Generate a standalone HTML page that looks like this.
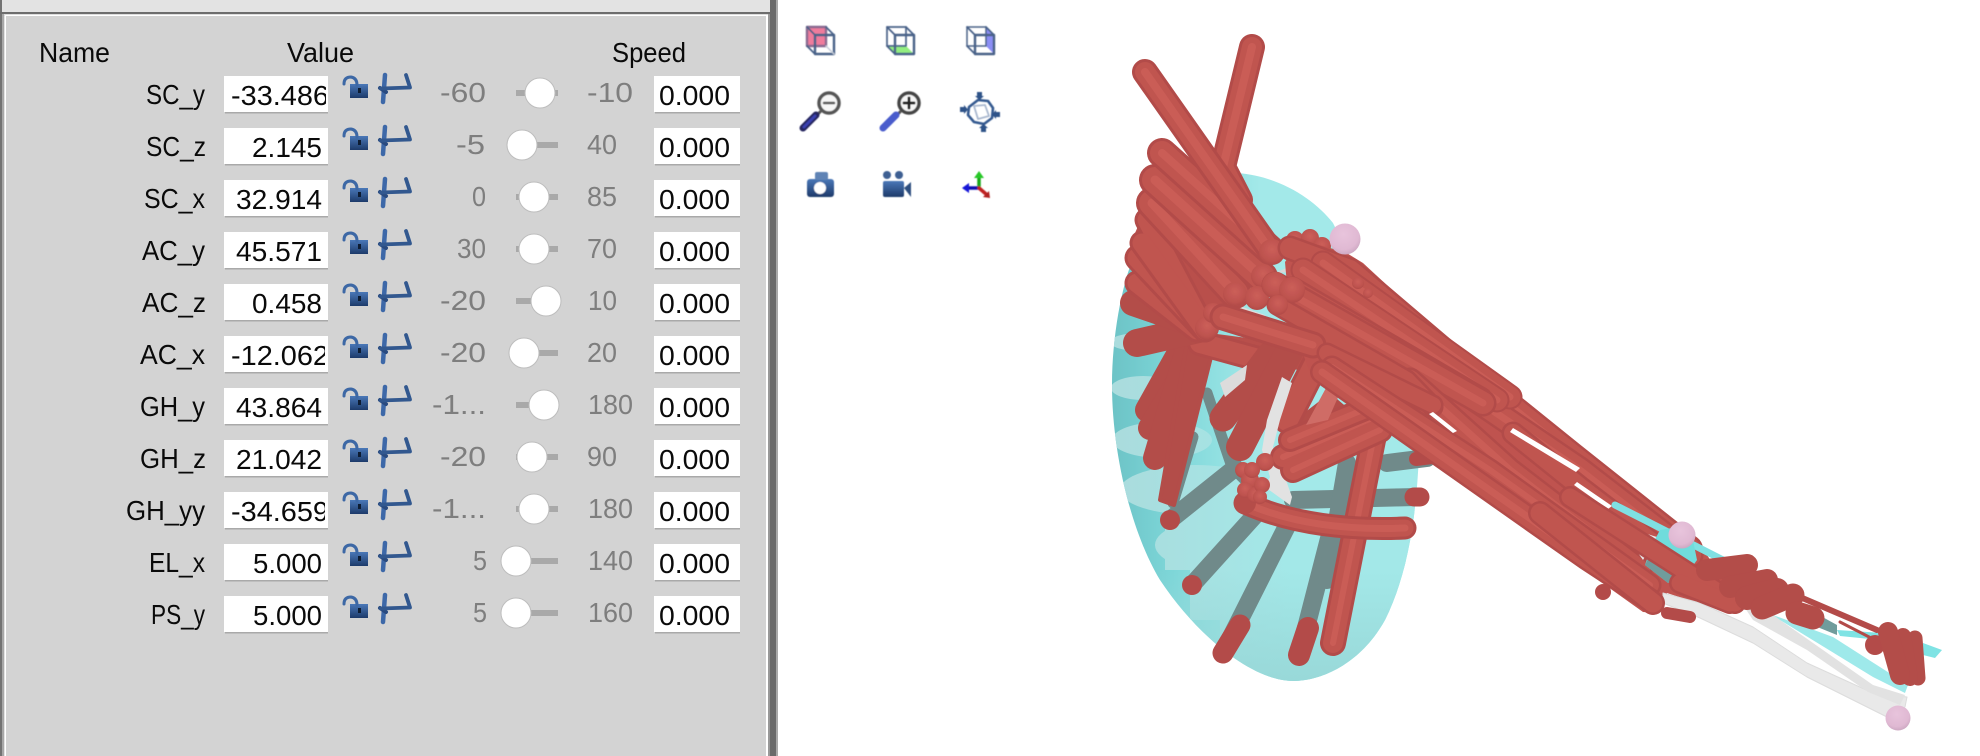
<!DOCTYPE html>
<html><head><meta charset="utf-8"><title>Model</title>
<style>
html,body{margin:0;padding:0;background:#fff;width:1980px;height:756px;overflow:hidden}
svg{display:block}
text{font-family:"Liberation Sans",sans-serif;font-size:28px;fill:#0a0a0a}
.g{fill:#7e7e7e}
.d{stroke:#b24c48}.m{stroke:#c05450}.l{stroke:#ca5d57}.k{stroke:#b34d49}
path,line{stroke-linecap:round;stroke-linejoin:round}
</style></head><body>
<svg width="1980" height="756" viewBox="0 0 1980 756" xmlns="http://www.w3.org/2000/svg">
<defs>
<filter id="b"><feGaussianBlur stdDeviation="0.55"/></filter>
<filter id="b2"><feGaussianBlur stdDeviation="0.35"/></filter>
<linearGradient id="lk" x1="0" y1="0" x2="0" y2="1"><stop offset="0" stop-color="#4a78b8"/><stop offset="1" stop-color="#1d3a6a"/></linearGradient>
<linearGradient id="cy" gradientUnits="userSpaceOnUse" x1="1112" y1="0" x2="1260" y2="0"><stop offset="0" stop-color="#6cc3c6"/><stop offset=".4" stop-color="#7dd6d8"/><stop offset="1" stop-color="#a3e9e9"/></linearGradient>
<linearGradient id="cr" gradientUnits="userSpaceOnUse" x1="1120" y1="0" x2="1290" y2="0"><stop offset="0" stop-color="#aadcdd"/><stop offset="1" stop-color="#a3e8e8"/></linearGradient>
<linearGradient id="bt" gradientUnits="userSpaceOnUse" x1="0" y1="570" x2="0" y2="685"><stop offset="0" stop-color="#98d8d8" stop-opacity="0"/><stop offset="1" stop-color="#98d8d8"/></linearGradient>
<radialGradient id="pk" cx=".45" cy=".35" r=".7"><stop offset="0" stop-color="#e8c4dc"/><stop offset=".7" stop-color="#e0b9d3"/><stop offset="1" stop-color="#c8a4be"/></radialGradient>
<radialGradient id="rj" cx=".5" cy=".4" r=".65"><stop offset="0" stop-color="#cc5f59"/><stop offset=".7" stop-color="#bd524e"/><stop offset="1" stop-color="#ac4845"/></radialGradient>
<clipPath id="c1"><rect x="226" y="70" width="100" height="50"/></clipPath>
<clipPath id="c2"><rect x="226" y="330" width="99" height="50"/></clipPath>
<clipPath id="c3"><rect x="226" y="486" width="99" height="50"/></clipPath>
<clipPath id="th"><path d="M1237 173C1280 176 1315 200 1333 223L1420 400C1420 480 1415 560 1385 620C1360 665 1320 681 1293 681C1255 681 1200 640 1160 580C1130 530 1112 450 1112 385C1112 330 1125 260 1147 233C1165 205 1200 175 1237 173Z"/></clipPath>
<g id="ic" filter="url(#b2)">
<rect x="350" y="84" width="18" height="14" fill="url(#lk)"/>
<rect x="358" y="88" width="3" height="5" fill="#0d1a33"/>
<path d="M344 84Q344 77 351 77Q357 78 357 85" fill="none" stroke="#3d68a5" stroke-width="3"/>
<path d="M385 75L383 102" fill="none" stroke="#3e68a8" stroke-width="4.500"/>
<path d="M380 88L386 92" fill="none" stroke="#2a4c80" stroke-width="4"/>
<path d="M381 88.500L410 87.500L406 75" fill="none" stroke="#32588f" stroke-width="3.800"/>
</g>
<g id="f"><rect x="0" y="0" width="104" height="36" fill="#fff"/><rect x="1" y="36" width="103" height="1.500" fill="#a9a9a9"/></g>
<g id="s"><rect x="0" y="0" width="86" height="36" fill="#fff"/><rect x="1" y="36" width="85" height="1.500" fill="#a9a9a9"/></g>

<g id="t2"><path d="M1252 47L1223 167L1240 200"/></g>
<g id="t1"><path d="M1145 72L1270 250"/></g>
<g id="t3"><path d="M1162 153L1270 250"/></g>
<g id="t4"><path d="M1155 180L1262 277"/></g>
<g id="t5"><path d="M1152 203L1235 293"/></g>
<g id="t6"><path d="M1147 220L1205 330"/><path d="M1142 243L1205 330"/></g>
<g id="t8"><path d="M1138 258L1203 327"/></g>
<g id="t9"><path d="M1137 283L1197 330"/></g>
<g id="t10"><path d="M1133 303L1203 327"/></g>
<g id="t11"><path d="M1137 343L1203 328"/></g>
<g id="fa"><path d="M1147 410L1190 333"/><path d="M1150 428L1185 370"/></g>
<g id="fb"><path d="M1155 458L1190 340"/></g>
<g id="fd"><path d="M1223 418L1270 355"/></g>
<g id="fd2"><path d="M1240 447L1290 350"/></g>
<g id="fe"><path d="M1287 420L1325 345"/></g>
<g id="ff"><path d="M1283 457L1390 410"/><path d="M1293 470L1380 430"/></g>
<g id="fg"><path d="M1290 440L1375 405"/></g>
<g id="h1"><path d="M1200 343L1273 363"/></g>
<g id="e"><path d="M1333 643L1373 440L1380 415"/></g>
<g id="cv"><path d="M1245 503Q1310 532 1405 528"/></g>
<g id="u1"><path d="M1340 268L1436 348L1505 402L1572 456L1689 549"/></g>
<g id="u0"><path d="M1290 248L1350 270L1450 355"/></g>
<g id="b13"><path d="M1477 400L1580 470L1690 555"/></g>
<g id="b14"><path d="M1513 433L1580 487L1665 552"/></g>
<g id="b5"><path d="M1323 263L1510 397"/></g>
<g id="b4"><path d="M1303 270L1497 400"/></g>
<g id="b3"><path d="M1292 290L1480 400"/></g>
<g id="b2a"><path d="M1275 285L1483 403"/></g>
<g id="b6"><path d="M1277 305L1407 380L1433 407"/></g>
<g id="b7"><path d="M1223 317L1313 345"/></g>
<g id="b8"><path d="M1327 353L1433 405"/></g>
<g id="b12"><path d="M1410 380L1510 470L1640 570"/></g>
<g id="b9"><path d="M1332 367L1490 470L1650 585"/></g>
<g id="b10"><path d="M1322 372L1586 558L1650 600"/></g>
<g id="x1"><path d="M1540 513L1653 603"/></g>
<g id="x2"><path d="M1570 497L1735 603"/><path d="M1680 583L1730 603"/></g>
<g id="w1"><path d="M1707 570L1747 565"/><path d="M1730 587L1767 580"/></g>
<g id="w2"><path d="M1747 598L1777 590"/></g>
<g id="w3"><path d="M1762 608L1793 595"/><path d="M1797 613L1813 618"/></g>
<g id="h3"><path d="M1888 632L1900 675"/></g>
<g id="h4"><path d="M1903 636L1910 678"/></g>
<g id="h5"><path d="M1915 638L1918 678"/></g>
</defs>

<!-- chrome -->
<rect x="0" y="0" width="778" height="756" fill="#e3e3e3"/>
<rect x="0" y="0" width="2" height="756" fill="#737373"/>
<rect x="2" y="14" width="2" height="742" fill="#a8a8a8"/>
<rect x="0" y="12" width="770" height="2" fill="#6d6d6d"/>
<rect x="4" y="14" width="766" height="2" fill="#dcdcdc"/>
<rect x="5" y="15" width="763" height="741" fill="#fff"/>
<rect x="6" y="16" width="760" height="740" fill="#d3d3d3"/>
<rect x="768" y="14" width="2" height="742" fill="#999"/>
<rect x="770" y="0" width="6" height="756" fill="#6a6a6a"/>
<rect x="776" y="0" width="2" height="756" fill="#a9a9a9"/>

<!-- headers -->
<text x="39" y="62" textLength="71" lengthAdjust="spacingAndGlyphs">Name</text>
<text x="287" y="62" textLength="67" lengthAdjust="spacingAndGlyphs">Value</text>
<text x="612" y="62" textLength="74" lengthAdjust="spacingAndGlyphs">Speed</text>

<!-- rows: fields -->
<use href="#f" x="224" y="76"/><use href="#f" x="224" y="128"/><use href="#f" x="224" y="180"/><use href="#f" x="224" y="232"/><use href="#f" x="224" y="284"/><use href="#f" x="224" y="336"/><use href="#f" x="224" y="388"/><use href="#f" x="224" y="440"/><use href="#f" x="224" y="492"/><use href="#f" x="224" y="544"/><use href="#f" x="224" y="596"/>
<use href="#s" x="654" y="76"/><use href="#s" x="654" y="128"/><use href="#s" x="654" y="180"/><use href="#s" x="654" y="232"/><use href="#s" x="654" y="284"/><use href="#s" x="654" y="336"/><use href="#s" x="654" y="388"/><use href="#s" x="654" y="440"/><use href="#s" x="654" y="492"/><use href="#s" x="654" y="544"/><use href="#s" x="654" y="596"/>
<use href="#ic" y="0"/><use href="#ic" y="52"/><use href="#ic" y="104"/><use href="#ic" y="156"/><use href="#ic" y="208"/><use href="#ic" y="260"/><use href="#ic" y="312"/><use href="#ic" y="364"/><use href="#ic" y="416"/><use href="#ic" y="468"/><use href="#ic" y="520"/>

<!-- labels -->
<text x="146" y="104" textLength="59" lengthAdjust="spacingAndGlyphs">SC_y</text>
<text x="146" y="156" textLength="60" lengthAdjust="spacingAndGlyphs">SC_z</text>
<text x="144" y="208" textLength="61" lengthAdjust="spacingAndGlyphs">SC_x</text>
<text x="142" y="260" textLength="63" lengthAdjust="spacingAndGlyphs">AC_y</text>
<text x="142" y="312" textLength="64" lengthAdjust="spacingAndGlyphs">AC_z</text>
<text x="140" y="364" textLength="65" lengthAdjust="spacingAndGlyphs">AC_x</text>
<text x="140" y="416" textLength="65" lengthAdjust="spacingAndGlyphs">GH_y</text>
<text x="140" y="468" textLength="66" lengthAdjust="spacingAndGlyphs">GH_z</text>
<text x="126" y="520" textLength="79" lengthAdjust="spacingAndGlyphs">GH_yy</text>
<text x="149" y="572" textLength="56" lengthAdjust="spacingAndGlyphs">EL_x</text>
<text x="151" y="624" textLength="54" lengthAdjust="spacingAndGlyphs">PS_y</text>

<!-- values -->
<g clip-path="url(#c1)"><text x="231" y="105" textLength="98" lengthAdjust="spacingAndGlyphs">-33.486</text></g>
<text x="252" y="157" textLength="70" lengthAdjust="spacingAndGlyphs">2.145</text>
<text x="236" y="209" textLength="86" lengthAdjust="spacingAndGlyphs">32.914</text>
<text x="236" y="261" textLength="86" lengthAdjust="spacingAndGlyphs">45.571</text>
<text x="252" y="313" textLength="70" lengthAdjust="spacingAndGlyphs">0.458</text>
<g clip-path="url(#c2)"><text x="231" y="365" textLength="98" lengthAdjust="spacingAndGlyphs">-12.062</text></g>
<text x="236" y="417" textLength="86" lengthAdjust="spacingAndGlyphs">43.864</text>
<text x="236" y="469" textLength="86" lengthAdjust="spacingAndGlyphs">21.042</text>
<g clip-path="url(#c3)"><text x="231" y="521" textLength="98" lengthAdjust="spacingAndGlyphs">-34.659</text></g>
<text x="253" y="573" textLength="69" lengthAdjust="spacingAndGlyphs">5.000</text>
<text x="253" y="625" textLength="69" lengthAdjust="spacingAndGlyphs">5.000</text>

<!-- min -->
<text class="g" x="440" y="102" textLength="46" lengthAdjust="spacingAndGlyphs">-60</text>
<text class="g" x="456" y="154" textLength="29" lengthAdjust="spacingAndGlyphs">-5</text>
<text class="g" x="472" y="206" textLength="14" lengthAdjust="spacingAndGlyphs">0</text>
<text class="g" x="457" y="258" textLength="29" lengthAdjust="spacingAndGlyphs">30</text>
<text class="g" x="440" y="310" textLength="46" lengthAdjust="spacingAndGlyphs">-20</text>
<text class="g" x="440" y="362" textLength="46" lengthAdjust="spacingAndGlyphs">-20</text>
<text class="g" x="432" y="414" textLength="54" lengthAdjust="spacingAndGlyphs">-1...</text>
<text class="g" x="440" y="466" textLength="46" lengthAdjust="spacingAndGlyphs">-20</text>
<text class="g" x="432" y="518" textLength="54" lengthAdjust="spacingAndGlyphs">-1...</text>
<text class="g" x="473" y="570" textLength="14" lengthAdjust="spacingAndGlyphs">5</text>
<text class="g" x="473" y="622" textLength="14" lengthAdjust="spacingAndGlyphs">5</text>

<!-- max -->
<text class="g" x="587" y="102" textLength="46" lengthAdjust="spacingAndGlyphs">-10</text>
<text class="g" x="587" y="154" textLength="30" lengthAdjust="spacingAndGlyphs">40</text>
<text class="g" x="587" y="206" textLength="30" lengthAdjust="spacingAndGlyphs">85</text>
<text class="g" x="587" y="258" textLength="30" lengthAdjust="spacingAndGlyphs">70</text>
<text class="g" x="588" y="310" textLength="29" lengthAdjust="spacingAndGlyphs">10</text>
<text class="g" x="587" y="362" textLength="30" lengthAdjust="spacingAndGlyphs">20</text>
<text class="g" x="588" y="414" textLength="45" lengthAdjust="spacingAndGlyphs">180</text>
<text class="g" x="587" y="466" textLength="30" lengthAdjust="spacingAndGlyphs">90</text>
<text class="g" x="588" y="518" textLength="45" lengthAdjust="spacingAndGlyphs">180</text>
<text class="g" x="588" y="570" textLength="45" lengthAdjust="spacingAndGlyphs">140</text>
<text class="g" x="588" y="622" textLength="45" lengthAdjust="spacingAndGlyphs">160</text>

<!-- speed -->
<text x="659" y="105" textLength="71" lengthAdjust="spacingAndGlyphs">0.000</text>
<text x="659" y="157" textLength="71" lengthAdjust="spacingAndGlyphs">0.000</text>
<text x="659" y="209" textLength="71" lengthAdjust="spacingAndGlyphs">0.000</text>
<text x="659" y="261" textLength="71" lengthAdjust="spacingAndGlyphs">0.000</text>
<text x="659" y="313" textLength="71" lengthAdjust="spacingAndGlyphs">0.000</text>
<text x="659" y="365" textLength="71" lengthAdjust="spacingAndGlyphs">0.000</text>
<text x="659" y="417" textLength="71" lengthAdjust="spacingAndGlyphs">0.000</text>
<text x="659" y="469" textLength="71" lengthAdjust="spacingAndGlyphs">0.000</text>
<text x="659" y="521" textLength="71" lengthAdjust="spacingAndGlyphs">0.000</text>
<text x="659" y="573" textLength="71" lengthAdjust="spacingAndGlyphs">0.000</text>
<text x="659" y="625" textLength="71" lengthAdjust="spacingAndGlyphs">0.000</text>

<!-- sliders -->
<g fill="#a9a9a9">
<rect x="516" y="90" width="42" height="6"/><rect x="516" y="142" width="42" height="6"/><rect x="516" y="194" width="42" height="6"/><rect x="516" y="246" width="42" height="6"/><rect x="516" y="298" width="42" height="6"/><rect x="516" y="350" width="42" height="6"/><rect x="516" y="402" width="42" height="6"/><rect x="516" y="454" width="42" height="6"/><rect x="516" y="506" width="42" height="6"/><rect x="516" y="558" width="42" height="6"/><rect x="516" y="610" width="42" height="6"/>
</g>
<g fill="#fff" stroke="#bdbdbd" stroke-width="1">
<circle cx="540" cy="93" r="15"/><circle cx="522" cy="145" r="15"/><circle cx="534" cy="197" r="15"/><circle cx="534" cy="249" r="15"/><circle cx="546" cy="301" r="15"/><circle cx="524" cy="353" r="15"/><circle cx="544" cy="405" r="15"/><circle cx="532" cy="457" r="15"/><circle cx="534" cy="509" r="15"/><circle cx="516" cy="561" r="15"/><circle cx="516" cy="613" r="15"/>
</g>

<!-- toolbar icons -->
<g filter="url(#b)" fill="none" stroke="#4a6288" stroke-width="2.400" stroke-linejoin="round">
<rect x="807" y="27" width="19" height="19" fill="#ef7b9c" stroke="#8a6a90"/>
<rect x="815" y="35" width="19" height="19"/><path d="M807 27L815 35M826 27L834 35M807 46L815 54" stroke-width="1.800"/><path d="M826 46L834 54" stroke="#c5cdd9" stroke-width="1.500"/>
<path d="M887 46L906 46L914 54L895 54Z" fill="#93ee80" stroke="none"/>
<rect x="887" y="27" width="19" height="19" stroke-width="1.700"/><rect x="895" y="35" width="19" height="19"/><path d="M887 27L895 35M906 27L914 35M887 46L895 54" stroke-width="1.800"/>
<path d="M986 27L994 35L994 54L986 46Z" fill="#8b8ef5" stroke="none"/>
<rect x="967" y="27" width="19" height="19" stroke-width="1.500"/><rect x="975" y="35" width="19" height="19"/><path d="M967 27L975 35M986 27L994 35M967 46L975 54" stroke-width="1.800"/>
</g>
<g filter="url(#b)" fill="none">
<circle cx="829" cy="103" r="10" stroke="#555" stroke-width="3.500" fill="#f6f6f6"/>
<line x1="824" y1="103" x2="834" y2="103" stroke="#555" stroke-width="2.500"/>
<line x1="820" y1="112" x2="815" y2="117" stroke="#555" stroke-width="3"/>
<line x1="803" y1="128" x2="816" y2="115" stroke="#26265e" stroke-width="7"/>
<line x1="804" y1="127" x2="815" y2="116" stroke="#3a3fb0" stroke-width="3"/>
<circle cx="909" cy="103" r="10" stroke="#444" stroke-width="3.500" fill="#f6f6f6"/>
<path d="M904 103L914 103M909 98L909 108" stroke="#222" stroke-width="3"/>
<line x1="900" y1="112" x2="896" y2="116" stroke="#555" stroke-width="3"/>
<line x1="883" y1="128" x2="896" y2="115" stroke="#4a5ccc" stroke-width="7"/>
<path d="M969 107L978 100L988 101L993 108L992 118L984 124L974 122L968 115Z" stroke="#355a90" stroke-width="2.600"/>
<path d="M974 106L985 105L989 116L978 119Z" stroke="#a9b8cf" stroke-width="1.800"/>
<rect x="977" y="92" width="5" height="5" fill="#2f5288"/><path d="M975 96L984 96L979.500 100Z" fill="#2f5288"/>
<rect x="981" y="127" width="5" height="5" fill="#2f5288"/><path d="M979 128L988 128L983.500 124Z" fill="#2f5288"/>
<rect x="960" y="107" width="5" height="5" fill="#2f5288"/><path d="M964 105L964 114L968 109.500Z" fill="#2f5288"/>
<rect x="995" y="112" width="5" height="5" fill="#2f5288"/><path d="M996 110L996 119L992 114.500Z" fill="#2f5288"/>
<rect x="807" y="179" width="27" height="18" rx="3" fill="url(#lk)"/>
<rect x="815" y="172" width="13" height="8" rx="2" fill="#5f83b5"/>
<circle cx="820" cy="188" r="6" fill="#fff"/>
<circle cx="887" cy="175" r="4" fill="#3c5f92"/><circle cx="899" cy="175" r="4" fill="#3c5f92"/>
<rect x="883" y="181" width="21" height="16" rx="2" fill="url(#lk)"/>
<path d="M904 188L911 182L911 197Z" fill="#2d5080"/>
<path d="M979 188L979 176" stroke="#18a818" stroke-width="3.500"/><path d="M974 178L979 171L984 178Z" fill="#28c828"/>
<path d="M979 188L968 188" stroke="#1010b0" stroke-width="3.500"/><path d="M969 183L962 188L969 193Z" fill="#1818d8"/>
<path d="M979 188L986 194" stroke="#c02020" stroke-width="3.500"/><path d="M983 197L990 198L989 191Z" fill="#b02020"/>
</g>

<!-- 3D scene -->
<g filter="url(#b2)" fill="none">
<path d="M1237 173C1280 176 1315 200 1333 223L1420 400C1420 480 1415 560 1385 620C1360 665 1320 681 1293 681C1255 681 1200 640 1160 580C1130 530 1112 450 1112 385C1112 330 1125 260 1147 233C1165 205 1200 175 1237 173Z" fill="url(#cy)"/>
<g clip-path="url(#th)" fill="url(#cr)">
<ellipse cx="1140" cy="342" rx="30" ry="9"/>
<ellipse cx="1143" cy="388" rx="32" ry="12"/>
<ellipse cx="1162" cy="440" rx="50" ry="18"/>
<ellipse cx="1195" cy="490" rx="75" ry="25"/>
<rect x="1165" y="510" width="300" height="60"/>
<ellipse cx="1240" cy="545" rx="85" ry="30"/>
<rect x="1190" y="560" width="250" height="60"/>
<ellipse cx="1275" cy="600" rx="75" ry="30"/>
<rect x="1220" y="610" width="220" height="80"/>
<rect x="1112" y="570" width="330" height="115" fill="url(#bt)"/>
</g>
<!-- ribs -->
<g stroke="#6f8a8a" stroke-width="18">
<path d="M1170 520L1235 468"/><path d="M1192 585L1257 513"/><path d="M1223 653L1290 520"/><path d="M1299 655L1333 523"/>
<path d="M1293 500L1417 497"/><path d="M1387 463L1427 458"/><path d="M1347 463L1327 580"/>
</g>
<g stroke="#6f8a8a" stroke-width="11"><path d="M1193 437L1173 503"/><path d="M1207 393L1232 467L1255 490"/></g>
<g fill="#b34c49" stroke="none">
<circle cx="1170" cy="520" r="10"/><circle cx="1192" cy="585" r="10"/><circle cx="1418" cy="497" r="9.500"/>
</g>
<path d="M1223 653L1240 625" stroke="#b34c49" stroke-width="21"/>
<path d="M1299 655L1308 628" stroke="#b34c49" stroke-width="22"/>
<path d="M1414 497L1420 497" stroke="#b34c49" stroke-width="19"/>
<path d="M1416 459L1440 456" stroke="#b34c49" stroke-width="14"/>

<!-- back tube -->
<use href="#t2" class="d" stroke-width="26"/><use href="#t2" class="m" stroke-width="20"/><use href="#t2" class="l" stroke-width="8"/>

<!-- fan -->
<use href="#fa" class="k" stroke-width="24"/>
<use href="#fb" class="k" stroke-width="24"/>
<path d="M1160 500L1174 505L1212 353L1187 343Z" fill="#b34d49" stroke="#b34d49" stroke-width="4"/>
<path d="M1187 330L1300 345L1310 372L1195 352Z" fill="#b8504b"/>
<use href="#h1" class="d" stroke-width="26"/><use href="#h1" class="m" stroke-width="20"/>

<!-- mass under lower-right fan -->
<path d="M1282 430L1330 393L1370 427L1390 437L1293 480L1277 457Z" fill="#b34d49"/>
<use href="#fd" class="k" stroke-width="27"/>
<use href="#fd2" class="k" stroke-width="28"/>
<use href="#e" class="d" stroke-width="26"/><use href="#e" class="m" stroke-width="20"/><use href="#e" class="l" stroke-width="6"/>
<use href="#fe" class="d" stroke-width="28"/><use href="#fe" class="m" stroke-width="22"/>

<!-- curved tube -->
<use href="#cv" class="d" stroke-width="23"/><use href="#cv" class="m" stroke-width="17"/><use href="#cv" class="l" stroke-width="7"/>
<circle cx="1245" cy="503" r="11" fill="#b54d49"/>

<!-- bones -->
<path d="M1282 377L1267 420L1262 450L1270 477L1265 487L1290 505L1292 497L1287 483L1273 447L1280 420L1292 383Z" fill="#e2e2e2"/>
<path d="M1220 383L1247 365L1245 380L1225 397Z" fill="#dcdcdc"/>
<path d="M1223 300L1265 315L1265 320L1222 306Z" fill="#ddd"/>

<use href="#ff" class="d" stroke-width="26"/><use href="#ff" class="m" stroke-width="20"/><use href="#ff" class="l" stroke-width="6"/>
<use href="#fg" class="d" stroke-width="24"/><use href="#fg" class="m" stroke-width="18"/><use href="#fg" class="l" stroke-width="6"/>
<path d="M1306 425L1333 375L1350 370L1328 420Z" fill="#cf6c66"/>
<g fill="url(#rj)" stroke="none">
<circle cx="1265" cy="462" r="9"/><circle cx="1243" cy="470" r="8"/><circle cx="1250" cy="480" r="9"/><circle cx="1245" cy="490" r="8"/><circle cx="1255" cy="495" r="8"/><circle cx="1262" cy="485" r="8"/><circle cx="1252" cy="470" r="8"/><circle cx="1260" cy="497" r="7"/>
</g>

<!-- upper left mass + tubes -->
<path d="M1147 177L1143 200L1142 217L1132 240L1130 257L1143 280L1123 297L1125 310L1180 320L1197 337L1223 310L1247 287L1213 247L1180 210Z" fill="#b9504c"/>
<use href="#t11" class="k" stroke-width="28"/>
<use href="#t10" class="k" stroke-width="26"/>
<use href="#t9" class="d" stroke-width="25"/><use href="#t9" class="m" stroke-width="19"/>
<use href="#t8" class="d" stroke-width="27"/><use href="#t8" class="m" stroke-width="21"/>
<use href="#t6" class="d" stroke-width="25"/><use href="#t6" class="m" stroke-width="19"/>
<use href="#t5" class="d" stroke-width="32"/><use href="#t5" class="m" stroke-width="26"/><use href="#t5" class="l" stroke-width="9"/>
<use href="#t4" class="d" stroke-width="32"/><use href="#t4" class="m" stroke-width="26"/><use href="#t4" class="l" stroke-width="9"/>
<use href="#t3" class="d" stroke-width="30"/><use href="#t3" class="m" stroke-width="24"/><use href="#t3" class="l" stroke-width="8"/>
<use href="#t1" class="d" stroke-width="26"/><use href="#t1" class="m" stroke-width="20"/><use href="#t1" class="l" stroke-width="8"/>
<g fill="url(#rj)" stroke="none">
<circle cx="1272" cy="252" r="13"/><circle cx="1263" cy="276" r="12"/><circle cx="1235" cy="294" r="12"/><circle cx="1207" cy="328" r="12"/><circle cx="1257" cy="298" r="12"/><circle cx="1213" cy="313" r="10"/>
<circle cx="1295" cy="240" r="9"/><circle cx="1310" cy="238" r="9"/><circle cx="1322" cy="246" r="9"/>
</g>
<path d="M1275 273L1327 250L1326 257L1292 272Z" fill="#d8d8d8"/>

<!-- main bundle -->
<path d="M1285 262L1300 240L1345 252L1363 263L1443 337L1510 390L1580 447L1623 480L1697 540L1737 600L1730 610L1697 603L1667 593L1657 613L1643 612L1580 567L1313 380L1290 320Z" fill="#bf534f"/>
<use href="#u1" class="d" stroke-width="28"/><use href="#u1" class="m" stroke-width="23"/><use href="#u1" class="l" stroke-width="8"/>
<use href="#u0" class="d" stroke-width="25"/><use href="#u0" class="m" stroke-width="20"/>
<use href="#b13" class="d" stroke-width="27"/><use href="#b13" class="m" stroke-width="22"/><use href="#b13" class="l" stroke-width="7"/>
<use href="#b5" class="d" stroke-width="25"/><use href="#b5" class="m" stroke-width="21"/><use href="#b5" class="l" stroke-width="7"/>
<use href="#b4" class="d" stroke-width="25"/><use href="#b4" class="m" stroke-width="21"/><use href="#b4" class="l" stroke-width="7"/>
<use href="#b14" class="d" stroke-width="23"/><use href="#b14" class="m" stroke-width="18"/>
<use href="#b3" class="d" stroke-width="27"/><use href="#b3" class="m" stroke-width="22"/><use href="#b3" class="l" stroke-width="8"/>
<use href="#b2a" class="d" stroke-width="27"/><use href="#b2a" class="m" stroke-width="22"/><use href="#b2a" class="l" stroke-width="7"/>
<use href="#b12" class="d" stroke-width="25"/><use href="#b12" class="m" stroke-width="20"/><use href="#b12" class="l" stroke-width="7"/>
<use href="#b6" class="d" stroke-width="21"/><use href="#b6" class="m" stroke-width="16"/>
<use href="#b7" class="d" stroke-width="27"/><use href="#b7" class="m" stroke-width="21"/><use href="#b7" class="l" stroke-width="7"/>
<use href="#b8" class="d" stroke-width="21"/><use href="#b8" class="m" stroke-width="16"/>
<use href="#b9" class="d" stroke-width="23"/><use href="#b9" class="m" stroke-width="18"/><use href="#b9" class="l" stroke-width="6"/>
<use href="#b10" class="d" stroke-width="24"/><use href="#b10" class="m" stroke-width="19"/><use href="#b10" class="l" stroke-width="7"/>
<g fill="url(#rj)" stroke="none">
<circle cx="1275" cy="285" r="13"/><circle cx="1292" cy="290" r="13"/><circle cx="1278" cy="305" r="10"/><circle cx="1358" cy="283" r="6"/><circle cx="1368" cy="293" r="5"/>
</g>
<!-- slits -->
<path d="M1433 412L1457 431L1453 433L1429 414Z" fill="#fff"/>
<path d="M1513 428L1580 468L1576 472L1510 432Z" fill="#fff"/>
<path d="M1577 482L1612 506L1608 509L1574 485Z" fill="#fff"/>

<!-- forearm -->
<path d="M1663 593L1700 603L1753 627L1807 663L1873 693L1907 697L1905 707L1887 717L1807 677L1753 643L1700 618L1663 603Z" fill="#e9e9e9" stroke="#dcdcdc" stroke-width="1"/>
<path d="M1745 608L1773 615L1873 685L1905 695L1900 705L1868 692L1807 650L1753 620Z" fill="#e2e2e2"/>
<path d="M1773 615L1833 637L1908 685L1905 693L1873 677L1780 620Z" fill="#9ee9ea"/>
<path d="M1615 505L1723 560" stroke="#7fe0e2" stroke-width="7"/>
<path d="M1618 525L1657 537L1643 560Z" fill="#e8e8e8"/>
<path d="M1660 530L1690 525L1697 560L1690 570L1668 583L1645 565L1652 545Z" fill="#6fdcdc"/>
<path d="M1655 545L1682 558L1690 565L1668 583L1645 565Z" fill="#6f9c9c"/>
<path d="M1797 603L1837 625L1837 635L1805 622Z" fill="#6f9c9c"/>
<path d="M1837 630L1883 633L1880 640L1840 636Z" fill="#7fe3e4"/>
<path d="M1923 643L1942 650L1935 658L1923 655Z" fill="#7fe3e4"/>
<path d="M1800 597L1877 630" stroke="#b34c49" stroke-width="6"/>
<path d="M1840 622L1875 640" stroke="#b34c49" stroke-width="3"/>
<use href="#x2" class="d" stroke-width="22"/><use href="#x2" class="m" stroke-width="17"/>
<use href="#x1" class="d" stroke-width="24"/><use href="#x1" class="m" stroke-width="19"/>
<use href="#w1" class="k" stroke-width="22"/>
<use href="#w2" class="k" stroke-width="24"/>
<use href="#w3" class="k" stroke-width="23"/>
<circle cx="1603" cy="592" r="8" fill="#b34c49"/>
<path d="M1667 613L1690 617" stroke="#b34c49" stroke-width="12"/>
<circle cx="1875" cy="645" r="10" fill="#b34c49"/>
<use href="#h5" class="k" stroke-width="15"/>
<use href="#h4" class="k" stroke-width="16"/>
<use href="#h3" class="k" stroke-width="20"/>

<!-- pink markers -->
<circle cx="1345" cy="239" r="15.500" fill="url(#pk)"/>
<circle cx="1682" cy="535" r="13.500" fill="url(#pk)"/>
<circle cx="1898" cy="718" r="12.500" fill="url(#pk)"/>
</g>
</svg>
</body></html>
